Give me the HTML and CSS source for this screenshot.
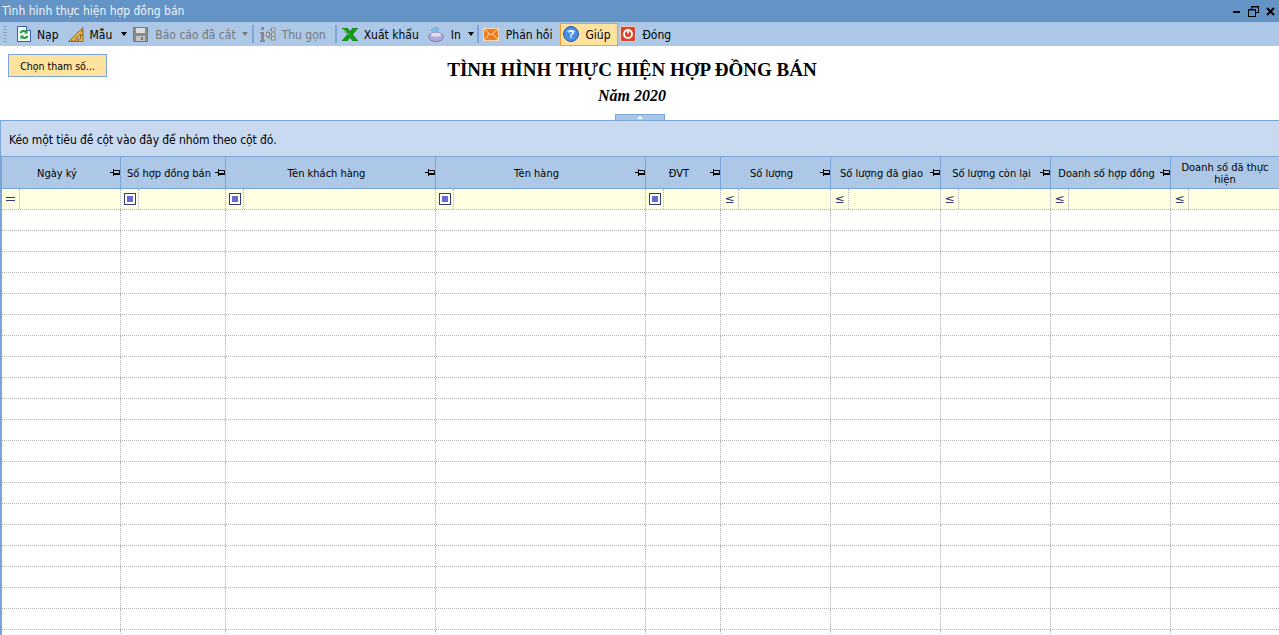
FILE: index.html
```html
<!DOCTYPE html>
<html lang="vi">
<head>
<meta charset="utf-8">
<title>Tình hình thực hiện hợp đồng bán</title>
<link rel="stylesheet" href="styles.css">
</head>
<body>
<div class="titlebar">
  <span class="title-text">Tình hình thực hiện hợp đồng bán</span>
  <div class="win-btns">
    <svg width="9" height="9" viewBox="0 0 9 9"><rect x="1" y="4" width="7" height="2" fill="#000"/></svg>
    <svg width="11" height="11" viewBox="0 0 11 11" fill="none" stroke="#000"><rect x="3.5" y="0.5" width="7" height="6"/><rect x="0.5" y="3.5" width="7" height="7" fill="#6494c6"/><path d="M3 1h8M0 4h8" /></svg>
    <svg width="9" height="9" viewBox="0 0 9 9" stroke="#000" stroke-width="2"><path d="M1 1l7 7M8 1l-7 7"/></svg>
  </div>
</div>
<div class="toolbar">
  <span class="grip"></span>
  <div class="tool t-nap">
    <svg width="14" height="16" viewBox="0 0 14 16"><path d="M.5.5h9l4 4v11H.5z" fill="#f4f7fc" stroke="#3c5fa0"/><path d="M9.5.5v4h4" fill="#c8d8f0" stroke="#3c5fa0"/><path d="M3.5 7a3.5 3 0 0 1 6-.8M10.500 10a3.500 3 0 0 1-6 .8" fill="none" stroke="#17a02a" stroke-width="2"/><path d="M10.500 3.500v4h-3.500zM3.500 13.500v-4h3.500z" fill="#17a02a"/></svg>
    <span>Nạp</span>
  </div>
  <div class="tool t-mau">
    <svg width="16" height="15" viewBox="0 0 16 15"><path d="M15 .5v14H.5z" fill="#e9b04c" stroke="#9a6a1c"/><path d="M12.500 7v5H7.500z" fill="#adc8e6" stroke="#9a6a1c"/><path d="M4 13v1M7 13v1M10 13v1M13 4h2M13 8h2" stroke="#7a4f10"/></svg>
    <span>Mẫu</span>
    <i class="caret"></i>
  </div>
  <div class="tool t-save disabled">
    <svg width="15" height="15" viewBox="0 0 15 15"><path d="M.5.5h14v14H.5z" fill="#8a8a8a" stroke="#777"/><rect x="3" y="1" width="9" height="5" fill="#ddd"/><rect x="3" y="9" width="9" height="5" fill="#c4c4c4"/><rect x="8" y="10" width="2" height="3" fill="#777"/></svg>
    <span>Báo cáo đã cắt</span>
    <i class="caret caret-dim"></i>
  </div>
  <span class="sep s1"></span>
  <div class="tool t-thu disabled">
    <svg width="16" height="15" viewBox="0 0 16 15"><path d="M1 0h3v3H1zM0 5h4v8h1v2H0v-2h1V7H0z" fill="#8a8a8a"/><path d="M9 2.500h3M8 4v7h4M8 7.500h4" fill="none" stroke="#8a8a8a"/><rect x="6.500" y="5.500" width="3" height="4" fill="#c8d2de" stroke="#8a8a8a"/><rect x="11.500" y="1" width="3.500" height="3" fill="#d4dce6" stroke="#8a8a8a"/><rect x="11.500" y="6" width="3.500" height="3" fill="#d4dce6" stroke="#8a8a8a"/><rect x="11.500" y="10" width="3.500" height="3" fill="#d4dce6" stroke="#8a8a8a"/></svg>
    <span>Thu gọn</span>
  </div>
  <span class="sep s2"></span>
  <div class="tool t-xls">
    <svg width="16" height="13" viewBox="0 0 16 13"><path d="M0 0h5l3 3.500L11 0h5l-5.500 6.500L16 13h-5L8 9.500 5 13H0l5.500-6.500z" fill="#12a012" stroke="#0a6a10" stroke-width=".6"/><path d="M1 1l6 6" stroke="#8be07c"/></svg>
    <span>Xuất khẩu</span>
  </div>
  <div class="tool t-in">
    <svg width="16" height="15" viewBox="0 0 16 15"><path d="M3 3l6-3 2 3-5 3z" fill="#7fc2f0" stroke="#5a8ec0" stroke-width=".6"/><ellipse cx="8" cy="10" rx="7.500" ry="4.500" fill="#b3a9d8" stroke="#7f78a8"/><ellipse cx="8" cy="7.500" rx="5" ry="2" fill="#e4e0f4"/></svg>
    <span>In</span>
    <i class="caret"></i>
  </div>
  <span class="sep s3"></span>
  <div class="tool t-mail">
    <svg width="16" height="13" viewBox="0 0 16 13"><rect x=".5" y=".5" width="15" height="12" fill="#f47a1c" stroke="#f8d8b0"/><path d="M1 1l7 6 7-6M1 12l5-6M15 12l-5-6" fill="none" stroke="#fde2c0"/></svg>
    <span>Phản hồi</span>
  </div>
  <div class="tool t-help">
    <svg width="16" height="16" viewBox="0 0 16 16"><circle cx="8" cy="8" r="7.500" fill="#4a8ce0" stroke="#2a5ca8"/><path d="M3 6a5.500 4 0 0 1 10 0z" fill="#9cc4f2"/><text x="8" y="12" class="q">?</text></svg>
    <span>Giúp</span>
  </div>
  <div class="tool t-close">
    <svg width="16" height="16" viewBox="0 0 16 16"><rect x=".5" y=".5" width="15" height="15" rx="1.500" fill="#d9482a" stroke="#f2c8b8"/><circle cx="8" cy="8" r="4" fill="none" stroke="#fff" stroke-width="1.800"/><path d="M8 3.500v4" stroke="#fff" stroke-width="1.800"/></svg>
    <span>Đóng</span>
  </div>
</div>

<div class="report">
  <div class="report-left"><button class="param-btn">Chọn tham số...</button></div>
  <div class="report-head">
    <h1>TÌNH HÌNH THỰC HIỆN HỢP ĐỒNG BÁN</h1>
    <h2>Năm 2020</h2>
  </div>
  <div class="collapse"><i></i></div>
</div>

<div class="grid">
  <div class="group-panel">Kéo một tiêu đề cột vào đây để nhóm theo cột đó.</div>
  <div class="row head">
    <div class="cell">Ngày ký<svg class="pin"><use href="#pin"/></svg></div>
    <div class="cell">Số hợp đồng bán<svg class="pin"><use href="#pin"/></svg></div>
    <div class="cell">Tên khách hàng<svg class="pin"><use href="#pin"/></svg></div>
    <div class="cell">Tên hàng<svg class="pin"><use href="#pin"/></svg></div>
    <div class="cell">ĐVT<svg class="pin"><use href="#pin"/></svg></div>
    <div class="cell">Số lượng<svg class="pin"><use href="#pin"/></svg></div>
    <div class="cell">Số lượng đã giao<svg class="pin"><use href="#pin"/></svg></div>
    <div class="cell">Số lượng còn lại<svg class="pin"><use href="#pin"/></svg></div>
    <div class="cell">Doanh số hợp đồng<svg class="pin"><use href="#pin"/></svg></div>
    <div class="cell last">Doanh số đã thực hiện</div>
  </div>
  <div class="row filter">
    <div class="cell"><span class="op"><i class="eq"></i></span></div>
    <div class="cell"><span class="op"><i class="sq"></i></span></div>
    <div class="cell"><span class="op"><i class="sq"></i></span></div>
    <div class="cell"><span class="op"><i class="sq"></i></span></div>
    <div class="cell"><span class="op"><i class="sq"></i></span></div>
    <div class="cell"><span class="op le">≤</span></div>
    <div class="cell"><span class="op le">≤</span></div>
    <div class="cell"><span class="op le">≤</span></div>
    <div class="cell"><span class="op le">≤</span></div>
    <div class="cell"><span class="op le">≤</span></div>
  </div>
  <div class="rows" id="rows"></div>
</div>
<svg width="0" height="0" class="defs"><symbol id="pin" viewBox="0 0 10 8"><path d="M0 3.500h4M3.500 0v7M4 1.500h5.500v3H4M4 5.500h6" fill="none" stroke="#000"/></symbol></svg>
<script src="rows.js"></script>
</body>
</html>
```
FILE: rows.js
```js
var host = document.getElementById('rows');
var html = '';
for (var r = 0; r < 21; r++) {
  html += '<div class="row body">' + new Array(11).join('<div class="cell"></div>') + '</div>';
}
host.innerHTML = html;
```
FILE: styles.css
```css
* { box-sizing: border-box; }
html, body { margin: 0; height: 635px; overflow: hidden; background: #fff; }
body { font: 11px "DejaVu Sans", sans-serif; font-stretch: condensed; color: #000; }
.titlebar { height: 22px; background: #6494c6; display: flex; align-items: center; justify-content: space-between; padding: 0 4px 0 2px; }
.title-text { color: #eef3fa; font-size: 12px; }
.win-btns { display: flex; align-items: center; gap: 7px; }
.toolbar { height: 24px; background: #adc8e6; display: flex; align-items: center; padding-left: 3px; font-size: 12px; }
.grip { width: 4px; height: 18px; margin-right: 10px; background-image: radial-gradient(#8aa3c0 .7px, transparent .8px); background-size: 2px 3px; }
.tool { display: flex; align-items: center; height: 22px; gap: 6px; white-space: nowrap; }
.tool span { padding-top: 2px; }
.tool svg { flex: none; }
.disabled { color: #777; }
.caret { width: 0; height: 0; border: 3.5px solid transparent; border-top: 4px solid #000; border-bottom: 0; }
.caret-dim { border-top-color: #777; }
.t-mau { margin-left: 9px; gap: 6px; }
.t-mau .caret { margin-left: 3px; }
.t-save { margin-left: 6px; gap: 7px; }
.t-save .caret { margin-left: -1px; }
.sep { width: 2px; height: 18px; background: #7ea6d6; flex: none; }
.s1 { margin: 0 6px 0 4px; }
.s2 { margin: 0 5px 0 9px; }
.s3 { margin: 0 4px 0 3px; }
.t-in { margin-left: 9px; gap: 7px; }
.t-in .caret { margin-left: 0; }
.t-mail { gap: 7px; }
.t-help { margin-left: 8px; height: 23px; width: 58px; padding-left: 2px; background: #ffe29e; border: 1px solid #f79a3c; gap: 6px; }
.q { font: bold 11px "Liberation Sans", sans-serif; fill: #fff; text-anchor: middle; }
.t-close { margin-left: 2px; gap: 6px; }
.report { height: 74px; display: grid; grid-template-columns: 107px 1fr; position: relative; }
.report-left { padding: 8px 0 0 8px; }
.param-btn { width: 99px; height: 23px; padding: 1px 0 0; background: #ffe29e; border: 1px solid #7ba4d8; font: 10.5px "DejaVu Sans", sans-serif; font-stretch: condensed; color: #000; }
.report-head { padding: 13px 122px 0 0; text-align: center; font-family: "Liberation Serif", "Times New Roman", serif; font-stretch: normal; }
.report-head h1 { margin: 0; font-size: 19px; line-height: 21px; font-weight: bold; }
.report-head h2 { margin: 7px 0 0; font-size: 16px; line-height: 18px; font-weight: bold; font-style: italic; }
.collapse { position: absolute; left: 615px; bottom: 0; width: 50px; height: 6px; background: #a9c4e4; border: 1px solid #7ba4d8; border-bottom: 0; display: flex; justify-content: center; }
.collapse i { margin-top: 1px; width: 0; height: 0; border: 3px solid transparent; border-bottom: 3px solid #fff; border-top: 0; }
.grid { border-left: 1px solid #7ba4d8; border-top: 1px solid #7ba4d8; height: 515px; overflow: hidden; }
.group-panel { height: 36px; margin-left: -1px; padding: 12px 0 0 9px; background: #c9daf0; border-bottom: 1px solid #7ba4d8; line-height: 14px; font-size: 12px; letter-spacing: -.08px; }
.row { display: grid; grid-template-columns: 119px 105px 210px 210px 75px 110px 110px 110px 120px 108px; }
.head { height: 32px; background: #adc8e6; border-bottom: 1px solid #7ba4d8; border-left: 1px solid #7ba4d8; }
.head .cell { position: relative; display: flex; align-items: center; justify-content: center; text-align: center; padding: 2px 11px 0 3px; border-right: 1px solid #7ba4d8; line-height: 12px; white-space: nowrap; }
.head .last { border-right: 0; padding: 2px 3px 0; white-space: normal; }
.pin { position: absolute; right: 0; top: 12px; width: 10px; height: 8px; }
.defs { position: absolute; }
.filter, .body { height: 21px; border-bottom: 1px dotted #b4b4b4; border-left: 1px solid #7ba4d8; }
.filter { background: #ffffe1; }
.filter .cell, .body .cell { border-right: 1px dotted #b4b4b4; }
.filter .cell { display: flex; }
.filter .cell:last-child, .body .cell:last-child { border-right: 0; }
.op { width: 18px; height: 20px; border-right: 1px dotted #b4b4b4; display: flex; align-items: center; justify-content: center; }
.sq { width: 12px; height: 12px; border: 1px solid #333a80; background: #fff; box-shadow: inset 0 0 0 2px #fff, inset 0 0 0 6px #6a6acc; }
.eq { width: 9px; height: 4px; border-top: 1px solid #333a80; border-bottom: 1px solid #333a80; }
.le { color: #333a80; font-size: 12px; font-stretch: normal; }
```
